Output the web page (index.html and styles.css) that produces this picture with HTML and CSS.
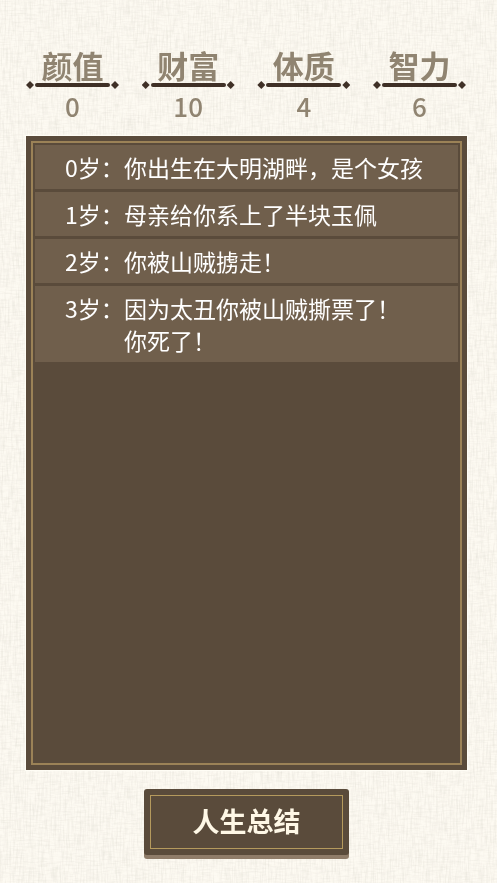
FILE: index.html
```
<!DOCTYPE html>
<html lang="zh-CN">
<head>
<meta charset="utf-8">
<meta name="viewport" content="width=device-width, initial-scale=1">
<title>人生总结</title>
<link rel="stylesheet" href="styles.css">
</head>
<body>
<svg class="paper" aria-hidden="true">
  <filter id="warp" x="0" y="0" width="100%" height="100%">
    <feTurbulence type="fractalNoise" baseFrequency="0.6 0.06" numOctaves="3" seed="4"/>
    <feColorMatrix values="0 0 0 0 0.6  0 0 0 0 0.57  0 0 0 0 0.5  0.5 0 0 0 -0.2"/>
  </filter>
  <filter id="weft" x="0" y="0" width="100%" height="100%">
    <feTurbulence type="fractalNoise" baseFrequency="0.08 0.6" numOctaves="3" seed="9"/>
    <feColorMatrix values="0 0 0 0 0.6  0 0 0 0 0.57  0 0 0 0 0.5  0.4 0 0 0 -0.17"/>
  </filter>
  <rect width="100%" height="100%" filter="url(#warp)"/>
  <rect width="100%" height="100%" filter="url(#weft)"/>
</svg>
<main class="game">
  <dl class="stats">
    <div class="stat"><dt class="stat-name">颜值</dt><dd class="stat-value">0</dd></div>
    <div class="stat"><dt class="stat-name">财富</dt><dd class="stat-value">10</dd></div>
    <div class="stat"><dt class="stat-name">体质</dt><dd class="stat-value">4</dd></div>
    <div class="stat"><dt class="stat-name">智力</dt><dd class="stat-value">6</dd></div>
  </dl>
  <section class="panel">
    <ol class="events">
      <li class="event"><span>0岁：</span><p>你出生在大明湖畔，是个女孩</p></li>
      <li class="event"><span>1岁：</span><p>母亲给你系上了半块玉佩</p></li>
      <li class="event"><span>2岁：</span><p>你被山贼掳走！</p></li>
      <li class="event"><span>3岁：</span><p>因为太丑你被山贼撕票了！<br>你死了！</p></li>
    </ol>
  </section>
  <button class="summary" type="button"><span class="summary-label">人生总结</span></button>
</main>
</body>
</html>
```
FILE: styles.css
```
* {
  box-sizing: border-box;
}

body {
  margin: 0;
  background: #fdfaf2;
  font-family: "Noto Sans CJK SC", sans-serif;
}

.paper {
  position: fixed;
  inset: 0;
  z-index: -1;
  width: 100%;
  height: 100%;
}

.game {
  display: flex;
  flex-direction: column;
  min-height: 100vh;
  padding: 44px 30px 24px 26px;
}

.stats {
  display: flex;
  justify-content: space-between;
  margin: 0 1px 12px 0;
  color: #908471;
  text-align: center;
}

.stat {
  width: 93px;
}

/* Underline with a diamond at each end */
.stat-name {
  position: relative;
  height: 44px;
  font-size: 31px;
  font-weight: 700;
  line-height: 41px;
}

.stat-name::before {
  content: "";
  position: absolute;
  right: 9px;
  bottom: 1px;
  left: 9px;
  height: 4px;
  border-radius: 2px;
  background: #3f3026;
}

.stat-name::after {
  content: "";
  position: absolute;
  right: 0;
  bottom: -1px;
  left: 0;
  height: 8px;
  background:
    linear-gradient(#3f3026, #3f3026) left / 8px 8px no-repeat,
    linear-gradient(#3f3026, #3f3026) right / 8px 8px no-repeat;
  clip-path: polygon(0 50%, 4px 0, 8px 50%, calc(100% - 8px) 50%, calc(100% - 4px) 0, 100% 50%, calc(100% - 4px) 100%, calc(100% - 8px) 50%, 8px 50%, 4px 100%);
}

.stat-value {
  margin: 0;
  height: 36px;
  font-size: 26px;
  font-weight: 500;
  line-height: 36px;
}

.panel {
  display: grid;
  flex: 1;
  padding: 5px;
  background: #5a4b3b;
  box-shadow: 0 0 1px 1px #fffdf5;
}

.events {
  display: flex;
  flex-direction: column;
  gap: 3px;
  margin: 0;
  padding: 2px;
  border: 2px solid #9b8257;
  list-style: none;
}

.event {
  display: flex;
  padding: 6px 0 6px 30px;
  background: #705f4c;
  color: #fff;
  font-size: 23px;
  line-height: 32px;
}

.event span {
  flex: 0 0 59px;
}

.event p {
  margin: 0;
}

.summary {
  align-self: center;
  width: 205px;
  height: 66px;
  margin: 19px 0 4px;
  padding: 6px;
  border: 0;
  border-radius: 3px;
  background: #5a4b3b;
  box-shadow: 0 4px 0 #8f7c69;
  color: #fff8e6;
  font: inherit;
}

.summary-label {
  display: block;
  border: 1px solid #b59a5d;
  font-size: 27px;
  font-weight: 700;
  line-height: 50px;
  padding-bottom: 2px;
}
```
